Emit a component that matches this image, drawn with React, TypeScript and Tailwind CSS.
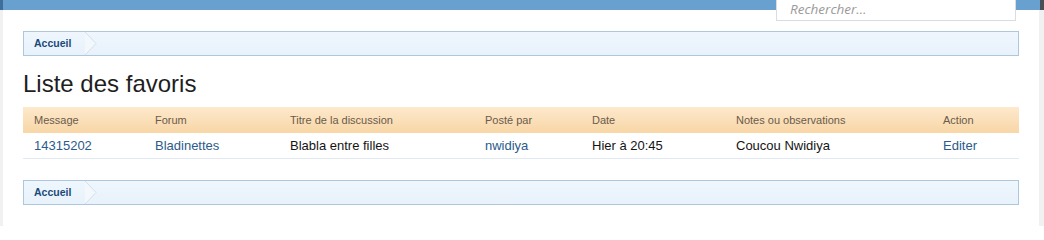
import React from "react";

function Crumb() {
  return (
    <div className="flex h-[25px] items-stretch border border-[#adc8dc] bg-gradient-to-b from-[#eff6fd] to-[#e8f2fb]">
      <a className="flex items-center pl-[10px] pr-[14px] text-[10.5px] font-bold text-[#1a4a78] [font-family:'Liberation_Sans',Arial,sans-serif]">
        Accueil
      </a>
      <svg width="13" height="23" viewBox="0 0 13 23" className="block">
        <polyline points="0,0 11,11.5 0,23" fill="#f3f8fd" stroke="#d3dfea" strokeWidth="1" />
      </svg>
    </div>
  );
}

const cols = ["w-[121px]", "w-[135px]", "w-[195px]", "w-[107px]", "w-[144px]", "w-[207px]", "flex-1"];

export default function App() {
  const headers = ["Message", "Forum", "Titre de la discussion", "Posté par", "Date", "Notes ou observations", "Action"];
  const row: { t: string; link: boolean }[] = [
    { t: "14315202", link: true },
    { t: "Bladinettes", link: true },
    { t: "Blabla entre filles", link: false },
    { t: "nwidiya", link: true },
    { t: "Hier à 20:45", link: false },
    { t: "Coucou Nwidiya", link: false },
    { t: "Editer", link: true },
  ];
  return (
    <div className="relative h-[226px] w-[1044px] overflow-hidden bg-[#f1f1f1] [font-family:'Liberation_Sans',Arial,sans-serif]">
      <div className="flex h-[10px]">
        <div className="w-[3px] bg-[#3d6e9c]" />
        <div className="flex-1 bg-[#68a1cf]" />
        <div className="w-[4px] bg-[#4a4f55]" />
      </div>
      <div className="absolute left-[776px] top-[-4px] flex h-[25px] w-[240px] items-center border border-[#dcdcdc] bg-white pl-[13px] pt-[1px]">
        <span className="text-[13.5px] leading-[18px] italic text-[#9a9a9a] [font-family:'Open_Sans',sans-serif]">Rechercher…</span>
      </div>
      <div className="ml-[3px] mr-[5px] h-[216px] bg-white px-5 pt-[21px]">
        <Crumb />
        <h1 className="mb-[8px] mt-[13px] text-[24px] leading-[30px] text-[#1e1e1e]">Liste des favoris</h1>
        <div className="flex h-[26px] items-center bg-gradient-to-b from-[#fde9cc] to-[#f8d6a6] pl-[11px] text-[11px] text-[#6a5b4c]">
          {headers.map((h, i) => (
            <div key={h} className={cols[i]}>{h}</div>
          ))}
        </div>
        <div className="flex h-[26px] items-center border-b border-[#e1eaf2] pl-[11px] text-[13px]">
          {row.map((c, i) => (
            <div key={i} className={`${cols[i]} ${c.link ? "text-[#2a5b8c]" : "text-[#141414]"}`}>{c.t}</div>
          ))}
        </div>
        <div className="mt-[21px]">
          <Crumb />
        </div>
      </div>
    </div>
  );
}
